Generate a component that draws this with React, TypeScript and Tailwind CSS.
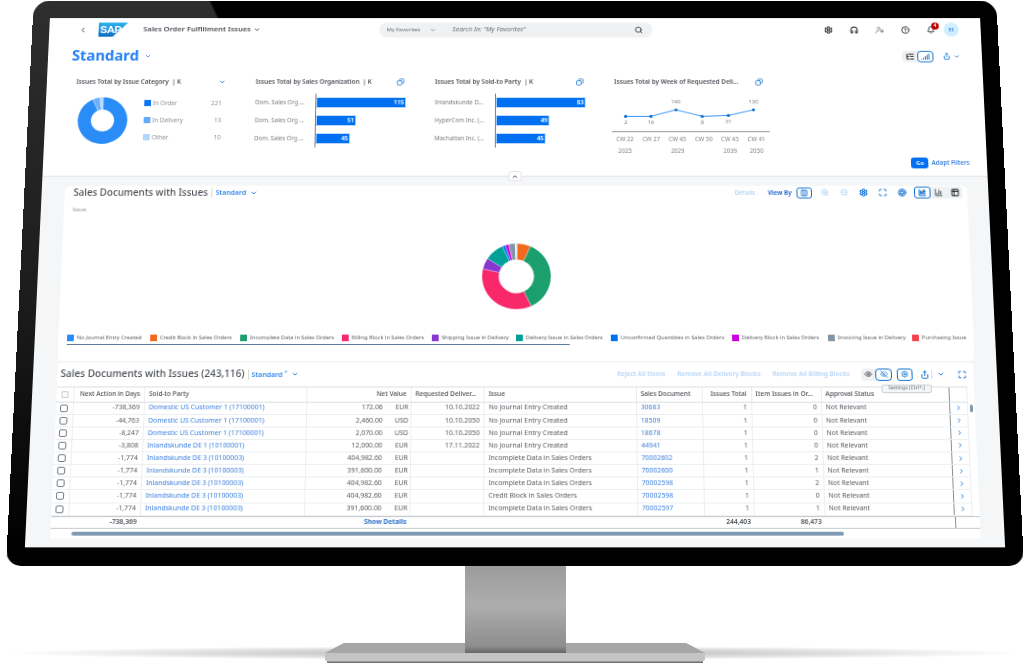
import React from 'react';
import {
  Aperture, Bell, ChartColumn, ChartColumnStacked, ChevronDown, ChevronLeft, ChevronRight, ChevronUp, CircleHelp,
  Columns3, Copy, Eye, EyeOff, Headphones, ListTree, Maximize, Search, Settings, Share, Signal, Table2, UserCog, ZoomIn, ZoomOut,
} from 'lucide-react';

const polar = (r: number, deg: number) => {
  const a = ((deg - 90) * Math.PI) / 180;
  return `${(r * Math.cos(a)).toFixed(2)} ${(r * Math.sin(a)).toFixed(2)}`;
};

function Donut({ size, inner, segments }: { size: number; inner: number; segments: [number, number, string][] }) {
  const r = size / 2;
  return (
    <svg width={size} height={size} viewBox={`${-r} ${-r} ${size} ${size}`} className="block shrink-0">
      {segments.map(([from, to, color]) => (
        <path
          key={from}
          fill={color}
          stroke="#ffffff"
          strokeWidth="0.3"
          d={`M${polar(r, from)}A${r} ${r} 0 ${to - from > 180 ? 1 : 0} 1 ${polar(r, to)}L${polar(inner, to)}A${inner} ${inner} 0 ${to - from > 180 ? 1 : 0} 0 ${polar(inner, from)}Z`}
        />
      ))}
    </svg>
  );
}

const smallDonut: [number, number, string][] = [
  [0, 335, '#2a8cf7'],
  [335, 352, '#6db0fa'],
  [352, 360, '#b3d5fc'],
];

const issueDonut: [number, number, string][] = [
  [0, 2, '#0a6ed1'],
  [2, 24, '#f3691c'],
  [24, 155, '#1c9f6e'],
  [155, 283, '#f8286a'],
  [283, 303, '#8a37d0'],
  [303, 336, '#00a196'],
  [336, 341, '#0070f2'],
  [341, 347, '#cc00dc'],
  [347, 358, '#8396a8'],
  [358, 360, '#ffffff'],
];

const legend = [
  ['No Journal Entry Created', 'bg-[#2a8cf7]', 'w-[85px]'],
  ['Credit Block in Sales Orders', 'bg-[#f3691c]', 'w-[92px]'],
  ['Incomplete Data in Sales Orders', 'bg-[#1c9f6e]', 'w-[104px]'],
  ['Billing Block in Sales Orders', 'bg-[#f8286a]', 'w-[92px]'],
  ['Shipping Issue in Delivery', 'bg-[#8a37d0]', 'w-[86px]'],
  ['Delivery Issue in Sales Orders', 'bg-[#00a196]', 'w-[97px]'],
  ['Unconfirmed Quantities in Sales Orders', 'bg-[#0070f2]', 'w-[124px]'],
  ['Delivery Block in Sales Orders', 'bg-[#cc00dc]', 'w-[98px]'],
  ['Invoicing Issue in Delivery', 'bg-[#8396a8]', 'w-[86px]'],
  ['Purchasing Issue', 'bg-[#f5434e]', 'w-[60px]'],
];

const salesOrg: [string, number, string][] = [
  ['Dom. Sales Org ...', 94, '115'],
  ['Dom. Sales Org ...', 42, '51'],
  ['Dom. Sales Org ...', 36, '45'],
];

const soldTo: [string, number, string][] = [
  ['Inlandskunde D...', 94, '83'],
  ['HyperCom Inc. (...', 56, '49'],
  ['Machattan Inc. (...', 52, '45'],
];

const weeks = [
  ['CW 22', '2025'],
  ['CW 27', ''],
  ['CW 45', '2029'],
  ['CW 50', ''],
  ['CW 45', '2039'],
  ['CW 41', '2050'],
];

const points: [number, number, string, number][] = [
  [13, 26, '2', 35],
  [40, 26, '16', 35],
  [67, 18.5, '140', 11],
  [95, 26, '8', 35],
  [123, 25, '31', 34],
  [150, 18.5, '130', 11],
];

const journal = 'No Journal Entry Created';
const incomplete = 'Incomplete Data in Sales Orders';
const us = 'Domestic US Customer 1 (17100001)';
const de3 = 'Inlandskunde DE 3 (10100003)';

const rows = [
  ['-738,369', us, '172.06', 'EUR', '10.10.2022', journal, '30683', '0'],
  ['-44,763', us, '2,460.00', 'USD', '10.10.2050', journal, '18509', '0'],
  ['-8,247', us, '2,070.00', 'USD', '10.10.2050', journal, '18678', '0'],
  ['-3,808', 'Inlandskunde DE 1 (10100001)', '12,000.00', 'EUR', '17.11.2022', journal, '44941', '0'],
  ['-1,774', de3, '404,982.60', 'EUR', '', incomplete, '70002602', '2'],
  ['-1,774', de3, '391,600.00', 'EUR', '', incomplete, '70002600', '1'],
  ['-1,774', de3, '404,982.60', 'EUR', '', incomplete, '70002598', '2'],
  ['-1,774', de3, '404,982.60', 'EUR', '', 'Credit Block in Sales Orders', '70002598', '0'],
  ['-1,774', de3, '391,600.00', 'EUR', '', incomplete, '70002597', '1'],
];

function CopyIcon() {
  return <Copy className="size-[8px] -scale-x-100 text-[#0a6ed1]" strokeWidth={2.4} />;
}

function SapLogo() {
  return (
    <svg width="31" height="16" viewBox="0 0 31 16" className="block">
      <defs>
        <linearGradient id="sapBlue" x1="0" y1="0" x2="0" y2="1">
          <stop offset="0" stopColor="#2fb4f0" />
          <stop offset="1" stopColor="#0a6ec4" />
        </linearGradient>
      </defs>
      <polygon points="0,0 31,0 15,16 0,16" fill="url(#sapBlue)" />
      <text x="1.5" y="12" fontSize="11.5" fontWeight="800" fill="#ffffff" fontFamily="Liberation Sans" letterSpacing="-0.5">SAP</text>
    </svg>
  );
}

function BarChart({ title, data }: { title: string; data: [string, number, string][] }) {
  return (
    <div className="flex flex-col">
      <div className="flex h-[16px] w-[156px] items-center justify-between">
        <span className="whitespace-pre text-[6.6px] font-semibold text-[#4a4f55]">{title}</span>
        <CopyIcon />
      </div>
      <div className="mt-[5px] flex flex-col">
        {data.map(([label, width, value], i) => (
          <div key={i} className="flex h-[20px] items-center">
            <span className="w-[63px] shrink-0 text-[6.2px] text-[#777b80]">{label}</span>
            <div className="flex h-full w-[1px] bg-[#777b80]" />
            <div className="flex h-[12px] items-center justify-end border border-[#b9d8fb] bg-[#0070f2] pr-[1px] text-[6.4px] font-semibold text-white" style={{ width }}>
              {value}
            </div>
          </div>
        ))}
      </div>
    </div>
  );
}

function Filters() {
  return (
    <div className="grid grid-cols-[188px_188px_188px_188px] pl-[31px]">
      <div className="flex flex-col">
        <div className="flex h-[16px] w-[157px] items-center justify-between">
          <span className="text-[6.6px] font-semibold text-[#4a4f55]">Issues Total by Issue Category&nbsp; | K</span>
          <ChevronDown className="size-[8px] text-[#0a6ed1]" strokeWidth={2.5} />
        </div>
        <div className="mt-[5px] flex h-[60px] items-center pl-[3px]">
          <Donut size={52} inner={12} segments={smallDonut} />
          <div className="ml-[17px] flex w-[81px] flex-col text-[6.4px] text-[#8a8f95]">
            {[['In Order', '221', 'bg-[#0a78f5]'], ['In Delivery', '13', 'bg-[#64acf9]'], ['Other', '10', 'bg-[#b3d5fc]']].map(([label, value, color]) => (
              <div key={label} className="flex h-[19px] items-center">
                <span className={`mr-[2px] size-[7px] ${color}`} />
                <span className="flex-1">{label}</span>
                <span>{value}</span>
              </div>
            ))}
          </div>
        </div>
      </div>
      <BarChart title="Issues Total by Sales Organization  | K" data={salesOrg} />
      <BarChart title="Issues Total by Sold-to Party  | K" data={soldTo} />
      <div className="flex flex-col">
        <div className="flex h-[16px] w-[156px] items-center justify-between">
          <span className="text-[6.6px] font-semibold text-[#4a4f55]">Issues Total by Week of Requested Deli...</span>
          <CopyIcon />
        </div>
        <div className="-ml-[3px] mt-[5px] flex w-[165px] flex-col">
          <svg width="165" height="43" viewBox="0 0 165 43" className="block border-b border-[#8c8c8c]">
            <polyline points={points.map(([x, y]) => `${x},${y}`).join(' ')} fill="none" stroke="#2a8cf7" strokeWidth="1" />
            {points.map(([x, y, label, labelY]) => (
              <g key={x}>
                <circle cx={x} cy={y} r="1.7" fill="#0a6ed1" />
                <text x={x} y={labelY} textAnchor="middle" fontSize="6.2" fill="#7b8085">{label}</text>
              </g>
            ))}
          </svg>
          <div className="grid grid-cols-[repeat(6,27.4px)] pt-[3px] text-center text-[6.2px] text-[#7b8085]">
            {weeks.map(([week], i) => <span key={i} className="h-[13px] leading-[9px]">{week}</span>)}
            {weeks.map(([, year], i) => <span key={i} className="leading-[9px]">{year}</span>)}
          </div>
        </div>
      </div>
    </div>
  );
}

function ShellBar() {
  return (
    <div className="flex h-[27px] items-center pl-[31px] pr-[23px]">
      <ChevronLeft className="size-[9px] text-[#32363a]" strokeWidth={2.6} />
      <div className="ml-[12px]"><SapLogo /></div>
      <span className="ml-[16px] text-[7.85px] font-semibold text-[#4a4f55]">Sales Order Fulfillment Issues</span>
      <ChevronDown className="ml-[3px] size-[8px] text-[#32363a]" strokeWidth={2.6} />
      <div className="ml-[125px] flex h-[17px] w-[288px] items-center rounded-full bg-[#eff1f2] pl-[7px] pr-[10px] text-[6px] text-[#6a6d70]">
        <span>My Favorites</span>
        <ChevronDown className="ml-[10px] size-[7px]" strokeWidth={2.6} />
        <span className="ml-[17px] flex-1 text-[7px] italic">Search In: &quot;My Favorites&quot;</span>
        <Search className="size-[9px] text-[#32363a]" strokeWidth={2.4} />
      </div>
      <div className="ml-auto flex items-center text-[#32363a]">
        <div className="flex w-[27px] justify-center"><Settings className="size-[9px]" strokeWidth={3} /></div>
        <div className="flex w-[27px] justify-center"><Headphones className="size-[9px]" strokeWidth={2.8} /></div>
        <div className="flex w-[27px] justify-center"><UserCog className="size-[9px] text-[#8a8f95]" strokeWidth={2.4} /></div>
        <div className="flex w-[27px] justify-center"><CircleHelp className="size-[9px]" strokeWidth={2.6} /></div>
        <div className="relative flex w-[27px] justify-center">
          <Bell className="size-[9px]" strokeWidth={2.6} />
          <span className="absolute -top-[4px] left-[14px] flex size-[8px] items-center justify-center rounded-full bg-[#b00] text-[5px] font-bold text-white">4</span>
        </div>
        <div className="flex size-[16px] items-center justify-center rounded-full bg-[#d1efff] text-[6px] text-[#0a6ed1]">EI</div>
      </div>
    </div>
  );
}

function TopSection() {
  return (
    <div className="relative h-[177.5px] shrink-0 border-b border-[#dfe2e5] bg-white">
      <ShellBar />
      <div className="flex h-[33px] items-center pl-[25px] pr-[23px]">
        <span className="text-[15.6px] font-bold text-[#2581f2]">Standard</span>
        <ChevronDown className="ml-[5px] size-[8px] text-[#2581f2]" strokeWidth={2.6} />
        <div className="ml-auto flex h-[13px] w-[33px] items-center rounded bg-[#eff1f2]">
          <div className="flex w-[16px] justify-center"><ListTree className="size-[9px] text-[#32363a]" strokeWidth={3} /></div>
          <div className="flex h-[13px] w-[17px] items-center justify-center rounded border border-[#0a6ed1] bg-white"><Signal className="size-[9px] text-[#0a6ed1]" strokeWidth={2.6} /></div>
        </div>
        <Share className="ml-[10px] size-[8px] text-[#0a6ed1]" strokeWidth={2.6} />
        <ChevronDown className="ml-[3px] size-[7px] text-[#0a6ed1]" strokeWidth={2.8} />
      </div>
      <div className="mt-[4px]"><Filters /></div>
      <div className="absolute bottom-[8px] right-[18px] flex items-center gap-[3px]">
        <span className="flex h-[12px] w-[18px] items-center justify-center rounded-[3px] bg-[#0070f2] text-[6px] font-bold text-white">Go</span>
        <span className="text-[6.4px] font-semibold text-[#3b82e0]">Adapt Filters</span>
      </div>
      <div className="absolute -bottom-[6px] left-[484px] flex h-[11px] w-[14px] items-center justify-center rounded-[3px] border border-[#e1e4e7] bg-white">
        <ChevronUp className="size-[8px] text-[#32363a]" strokeWidth={2.8} />
      </div>
    </div>
  );
}

function ChartCard() {
  return (
    <div className="ml-[24px] mt-[9.5px] h-[189px] w-[936px] shrink-0 overflow-hidden rounded-[6px] bg-white pl-[9px]">
      <div className="flex h-[16px] items-center">
        <span className="text-[10.1px] font-medium text-[#4a4f55]">Sales Documents with Issues</span>
        <span className="ml-[4px] h-[11px] w-[1px] bg-[#d9d9d9]" />
        <span className="ml-[3px] text-[7.2px] font-semibold text-[#2f86f0]">Standard</span>
        <ChevronDown className="ml-[4px] size-[8px] text-[#0a6ed1]" strokeWidth={2.6} />
        <div className="ml-auto mr-[5px] flex items-center text-[#0a6ed1]">
          <span className="mr-[13px] text-[6.4px] font-semibold text-[#b5d3f7]">Details</span>
          <span className="mr-[5px] text-[6.4px] font-bold text-[#2a6fcf]">View By</span>
          <div className="mr-[3px] flex h-[12px] w-[16px] items-center justify-center rounded-[3px] border border-[#0a6ed1]"><Columns3 className="size-[8px]" strokeWidth={2.4} /></div>
          <div className="flex w-[20px] justify-center"><ZoomIn className="size-[9px] text-[#a9cdf5]" strokeWidth={2.2} /></div>
          <div className="flex w-[20px] justify-center"><ZoomOut className="size-[9px] text-[#a9cdf5]" strokeWidth={2.2} /></div>
          <div className="flex w-[20px] justify-center"><Settings className="size-[9px]" strokeWidth={3} /></div>
          <div className="flex w-[20px] justify-center"><Maximize className="size-[9px]" strokeWidth={2.6} /></div>
          <div className="flex w-[20px] justify-center"><Aperture className="size-[9px]" strokeWidth={2.4} /></div>
          <div className="ml-[3px] flex h-[13px] w-[50px] items-center rounded-[3px] bg-[#eff1f2]">
            <div className="flex h-[13px] w-[17px] items-center justify-center rounded-[3px] border border-[#0a6ed1] bg-white"><ChartColumnStacked className="size-[9px]" strokeWidth={2.6} /></div>
            <div className="flex w-[17px] justify-center"><ChartColumn className="size-[9px] text-[#32363a]" strokeWidth={2.2} /></div>
            <div className="flex w-[16px] justify-center"><Table2 className="size-[9px] text-[#32363a]" strokeWidth={2.8} /></div>
          </div>
        </div>
      </div>
      <div className="mt-[6.6px] h-[8px] text-[5.6px] leading-[8px] text-[#8a8f95]">Issue</div>
      <div className="mt-[33px] flex justify-center pr-[9px]"><Donut size={71} inner={18} segments={issueDonut} /></div>
      <div className="mt-[26px] flex h-[8px] w-[929px] items-center overflow-hidden text-[5.7px] text-[#5b6068]">
        {legend.map(([label, color, width]) => (
          <div key={label} className={`flex shrink-0 items-center ${width}`}>
            <span className={`mr-[3px] size-[7px] shrink-0 ${color}`} />
            <span className="whitespace-nowrap">{label}</span>
          </div>
        ))}
      </div>
      <div className="mt-[2.6px] h-[1px] w-[514px] bg-[#5b7a9e]" />
    </div>
  );
}

function Row({ cells }: { cells: string[] }) {
  const [days, party, net, currency, date, issue, doc, items] = cells;
  return (
    <div className="flex h-[13.14px] items-center border-b border-[#eceef0] text-[6.9px] text-[#55595e]">
      <div className="flex h-full w-[18px] items-center justify-center border-r border-[#eceef0]">
        <span className="size-[8px] rounded-[2px] border border-[#6f7a85] bg-white" />
      </div>
      <div className="flex h-full w-[72px] items-center justify-end border-r border-[#eceef0] pr-[4px]">{days}</div>
      <div className="flex h-full w-[165px] items-center border-r border-[#eceef0] pl-[4px] text-[#3b7fdc]">{party}</div>
      <div className="flex h-full w-[106px] items-center border-r border-[#eceef0]">
        <span className="flex-1 text-right">{net}</span>
        <span className="w-[28px] pr-[2px] text-right">{currency}</span>
      </div>
      <div className="flex h-full w-[74.5px] items-center justify-end border-r border-[#eceef0] pr-[4px]">{date}</div>
      <div className="flex h-full w-[154.5px] items-center border-r border-[#eceef0] pl-[4px]">{issue}</div>
      <div className="flex h-full w-[67px] items-center border-r border-[#eceef0] pl-[4px] text-[#3b7fdc]">{doc}</div>
      <div className="flex h-full w-[50px] items-center justify-end border-r border-[#eceef0] pr-[4px]">1</div>
      <div className="flex h-full w-[71px] items-center justify-end border-r border-[#eceef0] pr-[4px]">{items}</div>
      <div className="flex h-full w-[130.5px] items-center border-r border-[#8a8f95] pl-[4px]">Not Relevant</div>
      <div className="flex h-full w-[18px] items-center justify-center border-r border-[#eceef0]">
        <ChevronRight className="size-[7px] text-[#0a6ed1]" strokeWidth={3} />
      </div>
    </div>
  );
}

function TableCard() {
  return (
    <div className="ml-[25px] mt-[2px] w-[933px] shrink-0 bg-white">
      <div className="flex h-[25px] items-center pl-[3px] pr-[7px]">
        <span className="text-[10.2px] font-medium text-[#4a4f55]">Sales Documents with Issues (243,116)</span>
        <span className="ml-[4px] h-[11px] w-[1px] bg-[#d9d9d9]" />
        <span className="ml-[2px] text-[7.2px] font-semibold text-[#2f86f0]">Standard <sup className="text-[5px]">*</sup></span>
        <ChevronDown className="ml-[4px] size-[8px] text-[#0a6ed1]" strokeWidth={2.6} />
        <div className="ml-auto flex items-center text-[6.5px] font-semibold text-[#b5d3f7]">
          <span className="mr-[12px]">Reject All Items</span>
          <span className="mr-[12px]">Remove All Delivery Blocks</span>
          <span className="mr-[12px]">Remove All Billing Blocks</span>
          <div className="flex h-[13px] w-[31px] items-center rounded-[3px] bg-[#eff1f2]">
            <div className="flex w-[14px] justify-center"><Eye className="size-[8px] text-[#32363a]" strokeWidth={2.2} /></div>
            <div className="flex h-[13px] w-[17px] items-center justify-center rounded-[4px] border border-[#0a6ed1] bg-white"><EyeOff className="size-[8px] text-[#0a6ed1]" strokeWidth={2.2} /></div>
          </div>
          <div className="relative ml-[5px] flex h-[13px] w-[16px] items-center justify-center rounded-[3px] border border-[#0a6ed1]">
            <Settings className="size-[8px] text-[#0a6ed1]" strokeWidth={2.4} />
            <span className="absolute left-[-17px] top-[16px] z-10 flex h-[9px] w-[51px] items-center justify-center whitespace-nowrap rounded-[2px] border border-[#c9ccd0] bg-[#f5f6f7] text-[5.2px] font-normal text-[#6a6d70]">Settings (Ctrl+,)</span>
          </div>
          <Share className="ml-[8px] size-[9px] text-[#0a6ed1]" strokeWidth={2.6} />
          <span className="ml-[2px] h-[9px] w-[1px] bg-[#d9d9d9]" />
          <ChevronDown className="ml-[5px] size-[8px] text-[#0a6ed1]" strokeWidth={2.8} />
          <Maximize className="ml-[13px] size-[9px] text-[#0a6ed1]" strokeWidth={2.6} />
        </div>
      </div>
      <div className="flex">
        <div className="flex w-[926px] flex-col">
          <div className="flex h-[17px] items-center border-y border-[#d8dce0] text-[6.6px] font-medium text-[#4a4f55]">
            <div className="flex h-full w-[18px] items-center justify-center border-r border-[#eceef0]"><span className="size-[7px] rounded-[1px] border border-[#c4c8cc]" /></div>
            <div className="flex h-full w-[72px] items-center justify-end border-r border-[#eceef0] pr-[4px]">Next Action in Days</div>
            <div className="flex h-full w-[165px] items-center border-r border-[#eceef0] pl-[4px]">Sold-to Party</div>
            <div className="flex h-full w-[106px] items-center justify-end border-r border-[#eceef0] pr-[4px]">Net Value</div>
            <div className="flex h-full w-[74.5px] items-center border-r border-[#eceef0] pl-[4px]">Requested Deliver...</div>
            <div className="flex h-full w-[154.5px] items-center border-r border-[#eceef0] pl-[4px]">Issue</div>
            <div className="flex h-full w-[67px] items-center border-r border-[#eceef0] pl-[4px]">Sales Document</div>
            <div className="flex h-full w-[50px] items-center justify-end border-r border-[#eceef0] pr-[4px]">Issues Total</div>
            <div className="flex h-full w-[71px] items-center border-r border-[#eceef0] pl-[4px]">Item Issues in Or...</div>
            <div className="flex h-full w-[130.5px] items-center border-r border-[#8a8f95] pl-[4px]">Approval Status</div>
            <div className="h-full w-[18px] border-r border-[#eceef0]" />
          </div>
          {rows.map((cells, i) => <Row key={i} cells={cells} />)}
        </div>
        <div className="flex w-[7px] justify-center pt-[19px]"><span className="h-[8px] w-[3px] rounded-full bg-[#8396a8]" /></div>
      </div>
      <div className="flex h-[13px] items-center border-y border-[#c4c8cc] text-[6.7px] font-semibold text-[#4a4f55]">
        <div className="w-[90px] pr-[4px] text-right">-738,369</div>
        <div className="w-[271px] pr-[4px] text-right font-bold text-[#2a6fcf]">Show Details</div>
        <div className="w-[296px]" />
        <div className="w-[50px] pr-[4px] text-right">244,403</div>
        <div className="w-[71px] pr-[4px] text-right">86,473</div>
        <div className="h-full w-[130.5px] border-r border-[#8a8f95]" />
      </div>
      <div className="flex h-[10px] items-center pl-[21px]">
        <span className="h-[4px] w-[775px] rounded-full bg-[#7f9ab2]" />
      </div>
    </div>
  );
}

export default function App() {
  return (
    <div className="flex h-[663px] w-[1024px] flex-col items-center justify-end overflow-hidden bg-white pl-[6px] font-['Noto_Sans',sans-serif]">
      <div className="w-[1018px] h-[609px] shrink-0 origin-bottom rounded-t-[18px] rounded-b-[15px] bg-[linear-gradient(to_bottom,rgba(0,0,0,0)_0%,rgba(0,0,0,0.4)_55%,#000_97%),linear-gradient(65deg,#2e2e2e_36%,#000_36.2%)] px-[18px] pt-[19.5px] [transform:perspective(2000px)_rotateX(10.9deg)]">
        <div className="flex h-[570px] w-[982px] flex-col overflow-hidden bg-[#f5f6f7] blur-[0.35px]">
          <TopSection />
          <ChartCard />
          <TableCard />
        </div>
      </div>
      <div className="relative z-10 -mb-[10px] h-[87px] w-[101px] shrink-0 bg-[linear-gradient(to_bottom,#9c9c9c,#adadad_45%,#8e8e8e_92%,#666_100%)]" />
      <div className="flex h-[20px] w-full shrink-0 justify-center bg-[radial-gradient(50%_35%_at_50%_50%,#b4b4b4,#e0e0e0_65%,rgba(255,255,255,0))]">
        <svg width="382" height="20" viewBox="0 0 382 20" className="block">
          <polygon points="20,0 362,0 381,10 381,17 378,19 4,19 1,17 1,10" fill="#c4c4c4" />
          <polygon points="20,0 362,0 381,10 1,10" fill="#a6a6a6" />
          <rect x="3" y="18.5" width="376" height="1.5" fill="#6f6f6f" />
        </svg>
      </div>
    </div>
  );
}
